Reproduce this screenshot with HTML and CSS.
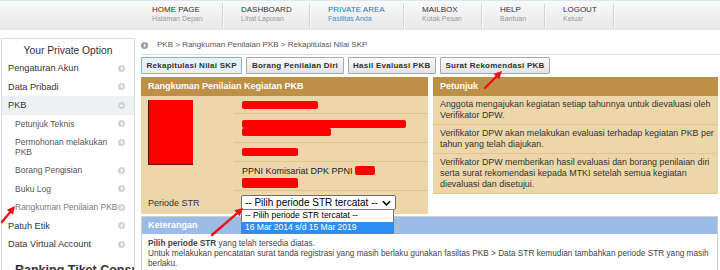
FILE: index.html
```html
<!DOCTYPE html>
<html lang="id">
<head>
<meta charset="utf-8">
<title>PKB - Rekapitulasi Nilai SKP</title>
<link rel="stylesheet" href="styles.css">
</head>
<body>
<nav class="topnav">
  <a class="nav-item n1"><span class="nav-title">HOME PAGE</span><span class="nav-sub">Halaman Depan</span></a>
  <a class="nav-item n2"><span class="nav-title">DASHBOARD</span><span class="nav-sub">Lihat Laporan</span></a>
  <a class="nav-item n3 current"><span class="nav-title">PRIVATE AREA</span><span class="nav-sub">Fasilitas Anda</span></a>
  <a class="nav-item n4"><span class="nav-title">MAILBOX</span><span class="nav-sub">Kotak Pesan</span></a>
  <a class="nav-item n5"><span class="nav-title">HELP</span><span class="nav-sub">Bantuan</span></a>
  <a class="nav-item n6"><span class="nav-title">LOGOUT</span><span class="nav-sub">Keluar</span></a>
</nav>

<div class="layout">
  <aside class="sidebar">
    <h3 class="side-head">Your Private Option</h3>
    <ul class="side-menu">
      <li class="side-row"><span class="label">Pengaturan Akun</span><svg class="chev" viewBox="0 0 8 8"><circle cx="4" cy="4" r="4"/><path d="M3.2 2.3L4.9 4L3.2 5.7"/></svg></li>
      <li class="side-row"><span class="label">Data Pribadi</span><svg class="chev" viewBox="0 0 8 8"><circle cx="4" cy="4" r="4"/><path d="M3.2 2.3L4.9 4L3.2 5.7"/></svg></li>
      <li class="side-row open"><span class="label">PKB</span><svg class="chev" viewBox="0 0 8 8"><circle cx="4" cy="4" r="4"/><path d="M2.3 3.2L4 4.9L5.7 3.2"/></svg></li>
      <li class="side-row sub"><span class="label">Petunjuk Teknis</span><svg class="chev" viewBox="0 0 8 8"><circle cx="4" cy="4" r="4"/><path d="M3.2 2.3L4.9 4L3.2 5.7"/></svg></li>
      <li class="side-row sub two"><span class="label">Permohonan melakukan<br>PKB</span><svg class="chev" viewBox="0 0 8 8"><circle cx="4" cy="4" r="4"/><path d="M3.2 2.3L4.9 4L3.2 5.7"/></svg></li>
      <li class="side-row sub"><span class="label">Borang Pengisian</span><svg class="chev" viewBox="0 0 8 8"><circle cx="4" cy="4" r="4"/><path d="M3.2 2.3L4.9 4L3.2 5.7"/></svg></li>
      <li class="side-row sub"><span class="label">Buku Log</span><svg class="chev" viewBox="0 0 8 8"><circle cx="4" cy="4" r="4"/><path d="M3.2 2.3L4.9 4L3.2 5.7"/></svg></li>
      <li class="side-row sub active"><span class="label">Rangkuman Penilaian PKB</span><svg class="chev" viewBox="0 0 8 8"><circle cx="4" cy="4" r="4"/><path d="M3.2 2.3L4.9 4L3.2 5.7"/></svg></li>
      <li class="side-row"><span class="label">Patuh Etik</span><svg class="chev" viewBox="0 0 8 8"><circle cx="4" cy="4" r="4"/><path d="M3.2 2.3L4.9 4L3.2 5.7"/></svg></li>
      <li class="side-row"><span class="label">Data Virtual Account</span><svg class="chev" viewBox="0 0 8 8"><circle cx="4" cy="4" r="4"/><path d="M3.2 2.3L4.9 4L3.2 5.7"/></svg></li>
    </ul>
    <h3 class="side-head2">Ranking Tiket Consult</h3>
  </aside>

  <main class="content">
    <div class="crumbs">
      <svg class="crumb-dot" viewBox="0 0 8 8"><circle cx="4" cy="4" r="4"/><path d="M3.2 2.3L4.9 4L3.2 5.7"/></svg>
      <span>PKB &gt; Rangkuman Penilaian PKB &gt; Rekapitulasi Nilai SKP</span>
    </div>

    <div class="tabs">
      <a class="tab active">Rekapitulasi Nilai SKP</a>
      <a class="tab">Borang Penilaian Diri</a>
      <a class="tab">Hasil Evaluasi PKB</a>
      <a class="tab">Surat Rekomendasi PKB</a>
    </div>

    <div class="panels">
      <section class="panel summary">
        <div class="panel-head">Rangkuman Penilaian Kegiatan PKB</div>
        <div class="summary-grid">
          <div class="photo-cell"><div class="photo"></div></div>
          <div class="data-cell"><span class="redact w76"></span></div>
          <div class="data-cell"><span class="redact w164"></span><span class="redact w89"></span></div>
          <div class="data-cell"><span class="redact w56"></span></div>
          <div class="data-cell top">
            <div class="org-line">PPNI Komisariat DPK PPNI <span class="redact inline w20"></span></div>
            <span class="redact w56 tall"></span>
          </div>
          <div class="label-cell">Periode STR</div>
          <div class="select-cell">
            <div class="select">
              <span>-- Pilih periode STR tercatat --</span>
              <svg class="select-arrow" viewBox="0 0 10 6"><path d="M1 1L5 5L9 1"/></svg>
            </div>
            <ul class="dropdown">
              <li class="opt">-- Pilih periode STR tercatat --</li>
              <li class="opt hl">16 Mar 2014 s/d 15 Mar 2019</li>
            </ul>
          </div>
        </div>
      </section>

      <section class="panel guide">
        <div class="panel-head">Petunjuk</div>
        <p class="guide-row">Anggota mengajukan kegiatan setiap tahunnya untuk dievaluasi oleh Verifikator DPW.</p>
        <p class="guide-row">Verifikator DPW akan melakukan evaluasi terhadap kegiatan PKB per tahun yang telah diajukan.</p>
        <p class="guide-row">Verifikator DPW memberikan hasil evaluasi dan borang penilaian diri serta surat rekomendasi kepada MTKI setelah semua kegiatan dievaluasi dan disetujui.</p>
      </section>
    </div>

    <section class="note">
      <div class="note-head">Keterangan</div>
      <div class="note-body">
        <p><b>Pilih periode STR</b> yang telah tersedia diatas.</p>
        <p>Untuk melakukan pencatatan surat tanda registrasi yang masih berlaku gunakan fasiltas PKB &gt; Data STR kemudian tambahkan periode STR yang masih berlaku.</p>
      </div>
    </section>
  </main>
</div>

<svg class="marks" viewBox="0 0 720 270" width="720" height="270">
  <line x1="2" y1="222" x2="10" y2="212.2"/>
  <polygon points="15,206 13.06,214.74 6.84,209.7"/>
  <line x1="485" y1="88" x2="496.3" y2="76.7"/>
  <polygon points="502,71 499.17,79.49 493.51,73.83"/>
  <line x1="212" y1="235" x2="237" y2="213.3"/>
  <polygon points="243,208 239.6,216.28 234.34,210.24"/>
</svg>
</body>
</html>
```

FILE: styles.css
```css
* { box-sizing: border-box; margin: 0; padding: 0; }
html, body { width: 720px; height: 270px; overflow: hidden; background: #fff; }
body { font-family: "Liberation Sans", Arial, sans-serif; color: #333; position: relative; }
ul { list-style: none; }

/* top navigation */
.topnav {
  display: flex;
  height: 30px;
  padding-left: 134px;
  border-top: 1px solid #dbe7ee;
  background: linear-gradient(#f9f9f9, #e7e7e7);
}
.nav-item {
  display: flex;
  flex-direction: column;
  height: 24px;
  margin-top: 3px;
  padding: 1px 0 0 18px;
  border-right: 1px solid #d4d4d4;
  box-shadow: 1px 0 0 #fafafa;
  text-decoration: none;
  color: #333;
}
.n1 { width: 89px; }
.n2 { width: 87px; }
.n3 { width: 94px; }
.n4 { width: 78px; }
.n5 { width: 63px; }
.n6 { width: 69px; }
.nav-title { font-size: 8px; line-height: 9px; color: #333; }
.nav-sub { font-size: 7px; line-height: 9px; color: #999; }
.current .nav-title { color: #1f78bd; }
.current .nav-sub { color: #3f8cc8; }

/* page layout */
.layout { display: flex; align-items: flex-start; }

.sidebar {
  width: 134px;
  height: 232px;
  margin: 8px 0 0 1px;
  border: 1px solid #dcdcdc;
  border-bottom: none;
  background: #fff;
  flex: none;
  overflow: hidden;
}
.side-head {
  font-size: 10.3px;
  font-weight: normal;
  line-height: 12px;
  text-align: center;
  padding: 6px 0 2px;
  color: #333;
}
.side-row {
  display: flex;
  align-items: flex-start;
  padding: 3px 9px 3px 6px;
  font-size: 9.2px;
  line-height: 12.5px;
  white-space: nowrap;
  color: #333;
}
.side-row .label { flex: 1; }
.side-row.sub { padding-left: 13px; font-size: 8.5px; color: #555; }
.side-row.open { background: #eef1f4; }
.side-row.active { color: #7a7a7a; }
.side-row.two { white-space: normal; line-height: 10px; padding-top: 4px; padding-bottom: 4px; }
.chev { width: 7px; height: 7px; flex: none; margin-top: 2.75px; }
.two .chev { margin-top: 1.5px; }
.chev circle { fill: #d2d2d2; }
.chev path { fill: none; stroke: #fff; stroke-width: 1.3; }
.side-head2 {
  margin-top: 9px;
  padding-left: 13px;
  font-size: 12.5px;
  line-height: 14px;
  font-weight: bold;
  color: #333;
  white-space: nowrap;
}

/* main */
.content { flex: 1; min-width: 0; margin: 0 2px 0 6px; }

.crumbs {
  display: flex;
  align-items: center;
  gap: 9px;
  padding: 10px 0 4px;
  border-bottom: 1px solid #dedede;
  font-size: 8px;
  line-height: 10px;
  color: #555;
  margin-right: -2px;
}
.crumb-dot { width: 7px; height: 7px; flex: none; }
.crumb-dot circle { fill: #9a9a9a; }
.crumb-dot path { fill: none; stroke: #fff; stroke-width: 1.3; }

.tabs { display: flex; gap: 4px; margin-top: 2px; }
.tab {
  display: block;
  height: 17px;
  padding: 0 4.5px;
  border: 1px solid #a8a8a8;
  border-radius: 1px;
  background: linear-gradient(#fbfbfb, #e3e3e3);
  font-size: 8px;
  font-weight: bold;
  line-height: 15px;
  letter-spacing: 0.25px;
  color: #333;
  white-space: nowrap;
}
.tab.active { background: #e8f1f9; border-color: #85b1d8; }

.panels { display: flex; align-items: flex-start; gap: 5px; margin-top: 3px; }
.panel { background: #edd6a9; }
.summary { width: 287px; flex: none; }
.guide { flex: 1; }
.panel-head {
  height: 19px;
  padding-left: 7px;
  background: #bd8f47;
  color: #fff;
  font-size: 9px;
  font-weight: bold;
  line-height: 19px;
}

.summary-grid {
  display: grid;
  grid-template-columns: 93px 1fr;
  grid-template-rows: 18px 29px 19px 29px 23px;
}
.photo-cell { grid-row: 1 / 5; padding: 4px 0 0 7px; }
.photo {
  width: 45px;
  height: 65px;
  background: #ff0000;
  border-left: 1px solid #4a0a0a;
  border-bottom: 1px solid #6a1010;
}
.data-cell {
  display: flex;
  flex-direction: column;
  justify-content: center;
  padding-left: 8px;
  border-bottom: 1px solid #e2c48f;
}
.data-cell.top { justify-content: flex-start; padding-top: 3px; }
.redact { display: block; background: #ff0000; border-radius: 2px; height: 8px; }
.redact.inline { display: inline-block; vertical-align: -1px; height: 9px; }
.redact.tall { height: 10px; margin-top: 1px; }
.w76 { width: 76px; }
.w164 { width: 164px; }
.w89 { width: 89px; }
.w56 { width: 56px; }
.w20 { width: 20px; }
.org-line { font-size: 9px; line-height: 12px; color: #222; white-space: nowrap; }

.label-cell { display: flex; align-items: center; padding-left: 7px; font-size: 9px; color: #333; }
.select-cell { position: relative; display: flex; align-items: center; padding-left: 7px; }
.select {
  width: 155px;
  height: 15px;
  display: flex;
  align-items: center;
  justify-content: space-between;
  padding: 0 4px 0 3px;
  border: 1px solid #6e6e6e;
  border-radius: 2px;
  background: #fff;
  font-size: 10px;
  color: #000;
  white-space: nowrap;
}
.select-arrow { width: 9px; height: 6px; }
.select-arrow path { fill: none; stroke: #000; stroke-width: 1.8; }
.dropdown {
  position: absolute;
  left: 7px;
  top: 18px;
  width: 153px;
  z-index: 5;
  border: 1px solid #7a7a7a;
  background: #fff;
}
.opt { height: 11.5px; padding-left: 3px; font-size: 8.5px; line-height: 11.5px; color: #000; white-space: nowrap; }
.opt.hl { background: #2e8ff2; color: #fff; }

.guide-row {
  padding: 3px 3px 3px 7px;
  font-size: 8.9px;
  line-height: 11px;
  color: #333;
  border-bottom: 1px solid #e2c48f;
}

.note { margin-top: 2px; border: 1px solid #cfcfcf; }
.note-head {
  height: 17px;
  padding-left: 6px;
  background: #9bbce6;
  color: #fff;
  font-size: 9px;
  font-weight: bold;
  line-height: 17px;
}
.note-body { padding: 5px 5px 4px 6px; font-size: 8.25px; line-height: 10px; color: #444; }

/* annotation arrows drawn over the screenshot */
.marks { position: absolute; left: 0; top: 0; pointer-events: none; z-index: 10; }
.marks line { stroke: #e8141c; stroke-width: 2.4; stroke-linecap: round; }
.marks polygon { fill: #e8141c; }
```
